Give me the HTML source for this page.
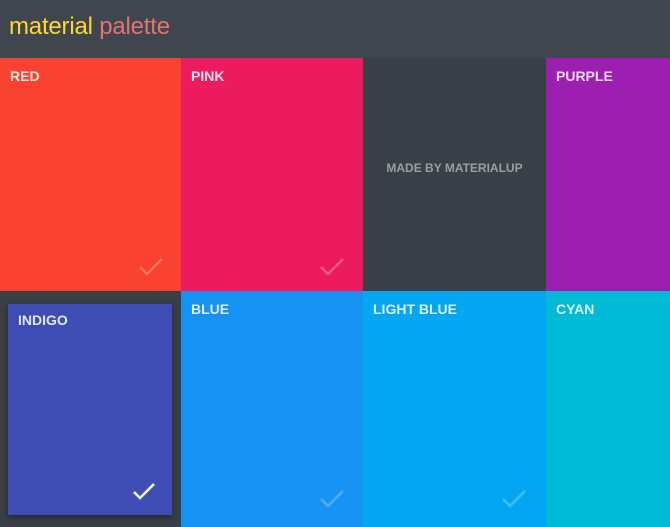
<!DOCTYPE html>
<html><head><style>
body{margin:0;width:670px;height:527px;overflow:hidden;font-family:"Liberation Sans",sans-serif;background:#393f46;position:relative}
.h{position:absolute;left:0;top:0;width:670px;height:58px;background:#3f464d}
.h span{position:absolute;left:9px;top:13px;font-size:24px;letter-spacing:-0.2px}
.c{position:absolute;box-sizing:border-box}
.l{position:absolute;left:10px;top:10px;font-weight:bold;font-size:14px;color:rgba(255,255,255,.85)}
svg{position:absolute}
</style></head><body>
<div class="h"><span><span style="position:static;color:#fdd835">material</span> <span style="position:static;color:#e57373">palette</span></span></div>
<div class="c" style="left:0;top:58px;width:181px;height:233px;background:#f94330"><div class="l">RED</div>
<svg style="left:138px;top:199px" width="26" height="20"><path d="M2 10 L9 17 L24 2" stroke="rgba(255,255,255,.25)" stroke-width="2.5" fill="none"/></svg></div>
<div class="c" style="left:181px;top:58px;width:182px;height:233px;background:#ec1a5e"><div class="l">PINK</div>
<svg style="left:138px;top:199px" width="26" height="20"><path d="M2 10 L9 17 L24 2" stroke="rgba(255,255,255,.25)" stroke-width="2.5" fill="none"/></svg></div>
<div class="c" style="left:363px;top:58px;width:183px;height:233px;background:#394047"><div style="position:absolute;left:0;right:0;top:103px;text-align:center;font-weight:bold;font-size:12px;color:#9a9fa3">MADE BY MATERIALUP</div></div>
<div class="c" style="left:546px;top:58px;width:124px;height:233px;background:#9c1fb1"><div class="l">PURPLE</div></div>
<div class="c" style="left:8px;top:304px;width:164px;height:211px;background:#3e4db4;box-shadow:0 2px 6px rgba(0,0,0,.4)"><div class="l" style="top:8px">INDIGO</div>
<svg style="left:124px;top:178px" width="26" height="20"><path d="M2 10 L8 16 L22 2" stroke="#fff" stroke-width="2.5" fill="none"/></svg></div>
<div class="c" style="left:181px;top:291px;width:182px;height:236px;background:#1592f4"><div class="l">BLUE</div>
<svg style="left:138px;top:198px" width="26" height="20"><path d="M2 10 L9 17 L24 2" stroke="rgba(255,255,255,.25)" stroke-width="2.5" fill="none"/></svg></div>
<div class="c" style="left:363px;top:291px;width:183px;height:236px;background:#03a6f2"><div class="l">LIGHT BLUE</div>
<svg style="left:138px;top:198px" width="26" height="20"><path d="M2 10 L9 17 L24 2" stroke="rgba(255,255,255,.25)" stroke-width="2.5" fill="none"/></svg></div>
<div class="c" style="left:546px;top:291px;width:124px;height:236px;background:#00bad6"><div class="l">CYAN</div></div>
</body></html>
